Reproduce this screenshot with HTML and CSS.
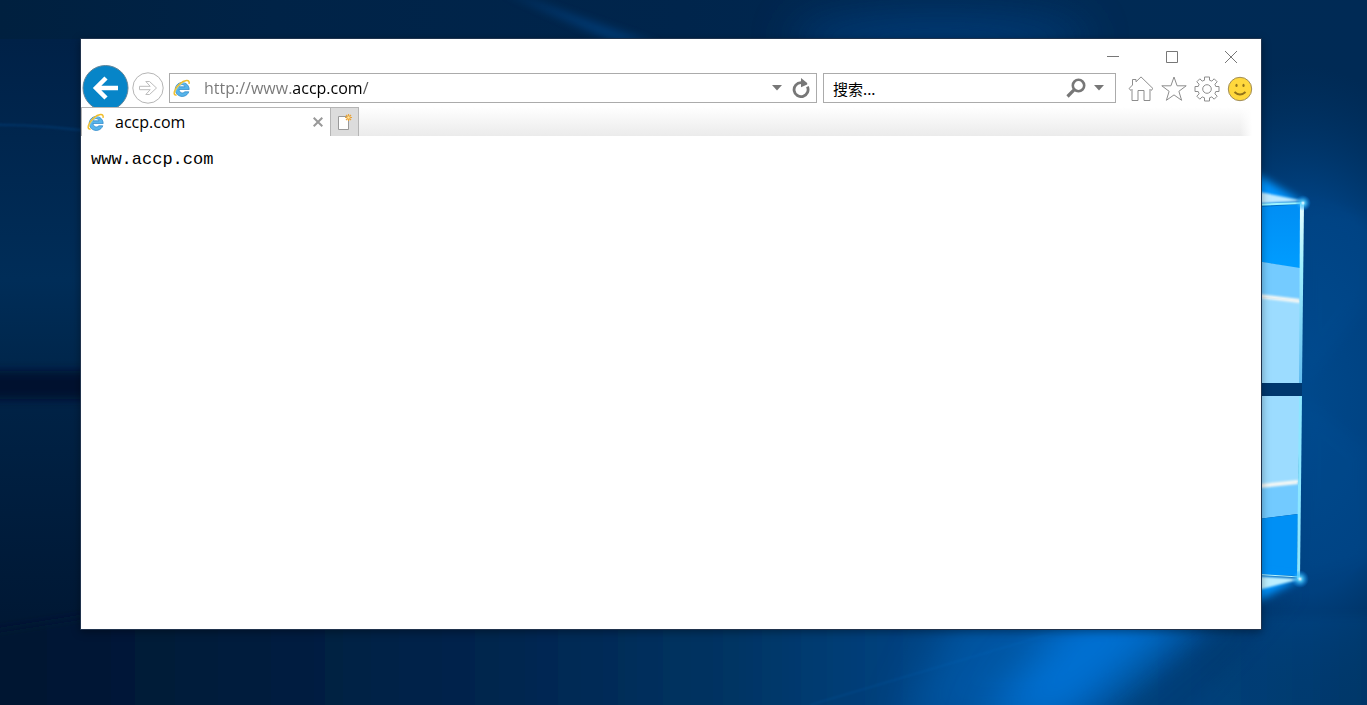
FILE: index.html
```html
<!DOCTYPE html>
<html lang="zh-CN">
<head>
<meta charset="utf-8">
<title>accp.com</title>
<link rel="stylesheet" href="styles.css">
</head>
<body class="desktop">
<svg class="wallpaper" viewBox="0 0 1367 705" preserveAspectRatio="none" aria-hidden="true">
  <defs>
    <linearGradient id="sky" x1="0" y1="0" x2="1" y2="0">
      <stop offset="0" stop-color="#00203f"/><stop offset=".2" stop-color="#002347"/><stop offset=".5" stop-color="#00254c"/><stop offset=".8" stop-color="#002a54"/><stop offset="1" stop-color="#002a55"/>
    </linearGradient>
    <linearGradient id="floor" x1="0" y1="0" x2="1" y2="0">
      <stop offset="0" stop-color="#00142f"/><stop offset=".2" stop-color="#001d3d"/><stop offset=".38" stop-color="#002650"/><stop offset=".52" stop-color="#003463"/><stop offset=".64" stop-color="#004280"/><stop offset=".8" stop-color="#004480"/><stop offset=".9" stop-color="#003b70"/><stop offset="1" stop-color="#00305f"/>
    </linearGradient>
    <linearGradient id="side" x1="0" y1="0" x2="0" y2="1"><stop offset="0" stop-color="#002147"/><stop offset=".4" stop-color="#002d58"/><stop offset=".55" stop-color="#00264b"/><stop offset=".58" stop-color="#002347"/><stop offset="1" stop-color="#001733"/></linearGradient>
    <radialGradient id="halo"><stop offset="0" stop-color="#00498c"/><stop offset=".6" stop-color="#004486" stop-opacity=".85"/><stop offset="1" stop-color="#00376b" stop-opacity="0"/></radialGradient>
    <radialGradient id="spark"><stop offset="0" stop-color="#fff"/><stop offset=".3" stop-color="#50cfff" stop-opacity=".8"/><stop offset="1" stop-color="#008cff" stop-opacity="0"/></radialGradient>
    <linearGradient id="deep" x1="0" y1="0" x2="0" y2="1"><stop offset="0" stop-color="#008ef4"/><stop offset="1" stop-color="#009dff"/></linearGradient>
    <linearGradient id="edge" x1="0" y1="0" x2="0" y2="1"><stop offset="0" stop-color="#eaffff"/><stop offset=".35" stop-color="#9ff0ff"/><stop offset="1" stop-color="#62bcef"/></linearGradient>
    <filter id="haze" filterUnits="userSpaceOnUse" x="-100" y="-100" width="1567" height="905"><feGaussianBlur stdDeviation="22"/></filter>
    <filter id="soft" filterUnits="userSpaceOnUse" x="-100" y="-100" width="1567" height="905"><feGaussianBlur stdDeviation="8"/></filter>
    <filter id="glow" filterUnits="userSpaceOnUse" x="-100" y="-100" width="1567" height="905"><feGaussianBlur stdDeviation="4"/></filter>
    <filter id="fine" filterUnits="userSpaceOnUse" x="-100" y="-100" width="1567" height="905"><feGaussianBlur stdDeviation="1"/></filter>
  </defs>
  <rect width="1367" height="705" fill="url(#sky)"/>
  <rect y="39" width="90" height="600" fill="url(#side)"/>
  <path d="M-30 125Q40 123 100 133" fill="none" stroke="#00407b" stroke-width="2" opacity=".6" filter="url(#fine)"/>
  <path d="M-30 371H110V399H-30Z" fill="#001029" opacity=".8" filter="url(#glow)"/>
  <path d="M-50 638L90 616H1450V760H-50Z" fill="url(#floor)" filter="url(#glow)"/>
  <path d="M500-10L660 45L620 45Z" fill="#00509a" opacity=".5" filter="url(#glow)"/>
  <ellipse cx="940" cy="38" rx="150" ry="26" fill="#004080" opacity=".75" filter="url(#haze)"/>
  <ellipse cx="1300" cy="395" rx="190" ry="330" fill="url(#halo)"/>
  <path d="M960 600L1230 600L1070 730L900 730Z" fill="#0065bd" opacity=".55" filter="url(#haze)"/>
  <path d="M1080 600L1210 600L1060 725L980 725Z" fill="#0080ee" opacity=".65" filter="url(#haze)"/>
  <path d="M1300 590L1180 720H1110L1220 630Z" fill="#00386d" opacity=".4" filter="url(#soft)"/>
  <path d="M1070 628L810 705" stroke="#0079d3" opacity=".25" filter="url(#fine)"/>
  <path d="M1303 203L1367 217V302L1303 390Z" fill="#0059a5" opacity=".15" filter="url(#soft)"/>
  <path d="M1300 579L1367 560V450L1303 395Z" fill="#0059a5" opacity=".15" filter="url(#soft)"/>
  <path d="M1250 170L1304 203L1250 209Z" fill="#0094ff" filter="url(#glow)"/>
  <path d="M1250 190L1304 201L1250 204Z" fill="#bfeaff" filter="url(#fine)"/>
  <path d="M1250 208L1302 204L1300 269L1250 260Z" fill="url(#deep)"/>
  <path d="M1250 260L1300 268V301L1250 295Z" fill="#74cbff"/>
  <path d="M1250 296L1300 301V383H1250Z" fill="#9cdcff"/>
  <path d="M1250 295L1300 301" stroke="#f5f8f5" stroke-width="4" filter="url(#fine)"/>
  <path d="M1300 203H1304L1302 383H1299Z" fill="url(#edge)"/>
  <path d="M1250 205L1304 203" stroke="#9cf4ff" stroke-width="2"/>
  <path d="M1250 383H1302V396H1250Z" fill="#00376e"/>
  <path d="M1250 396H1301L1298 482L1250 488Z" fill="#9cdcff"/>
  <path d="M1250 487L1298 482V514L1250 520Z" fill="#72caff"/>
  <path d="M1250 520L1298 514L1297 576L1250 574Z" fill="#0090f5"/>
  <path d="M1250 487L1298 482" stroke="#f5f8f5" stroke-width="4" filter="url(#fine)"/>
  <path d="M1299 396H1302L1300 579H1297Z" fill="#8ce6ff"/>
  <path d="M1250 605L1300 579L1250 573Z" fill="#0094ff" filter="url(#glow)"/>
  <path d="M1250 592L1301 579L1250 576Z" fill="#bcefff" filter="url(#fine)"/>
  <path d="M1250 574L1300 577" stroke="#b7f6ff" stroke-width="1"/>
  <circle cx="1303" cy="203" r="8" fill="url(#spark)"/>
  <circle cx="1300" cy="579" r="9" fill="url(#spark)"/>
</svg>

<svg class="sprite" aria-hidden="true">
  <symbol id="ie" viewBox="0 0 18 18">
    <path d="M6 10.5H16.2A7 7 0 1 0 15.8 12.8H11.8C10.3 14.8 6.4 14.2 6 10.5ZM6 7.8C6.6 4.8 11.3 4.8 11.9 7.8Z" fill="#56b4ea" fill-rule="evenodd" stroke="#2683c5" stroke-width=".7"/>
    <path d="M3.6 8C5.5 4.8 8.5 3.5 12 3.7" fill="none" stroke="#b9e4fc" stroke-width=".8"/>
    <path d="M3.6 15.9C-.8 17 1.2 9.6 6.6 5C11 1.3 17.4-.4 16 4.9" fill="none" stroke="#f0bd28" stroke-width="1.5"/>
    <path d="M2 14.2C1.8 11.5 5.8 6.6 9.6 4" fill="none" stroke="#ffe36f" stroke-width=".7"/>
  </symbol>
</svg>

<main class="window">
  <header class="titlebar">
    <button class="caption" aria-label="最小化"><svg viewBox="0 0 12 12"><path d="M0 5.5H12"/></svg></button>
    <button class="caption" aria-label="最大化"><svg viewBox="0 0 12 12"><path d="M.5.5H11.5V11.5H.5Z"/></svg></button>
    <button class="caption" aria-label="关闭"><svg viewBox="0 0 12 12"><path d="M0 0L12 12M12 0L0 12"/></svg></button>
  </header>

  <nav class="navbar">
    <button class="back" aria-label="后退">
      <svg viewBox="0 0 48 46"><circle cx="24.5" cy="23" r="22.5" fill="#0785c8" stroke="#5f8499"/><path d="M37 23H15M25 13L15 23L25 33" fill="none" stroke="#fff" stroke-width="4.5"/></svg>
    </button>
    <button class="forward" aria-label="前进">
      <svg viewBox="0 0 32 32"><circle cx="16" cy="16" r="15.2" fill="#fff" stroke="#b5b5b5"/><path d="M7.5 14.3H18.2L13.8 9.5H17.5L24.5 16L17.5 22.5H13.8L18.2 17.7H7.5Z" fill="#fff" stroke="#bcbcbc"/></svg>
    </button>
    <div class="field address">
      <svg class="favicon"><use href="#ie"/></svg>
      <input class="url" type="text" aria-label="地址" value="http://www.accp.com/">
      <button class="tool" aria-label="显示地址列表"><svg class="chevron" viewBox="0 0 10 6"><path d="M0 0H10L5 5.5Z" fill="#777"/></svg></button>
      <button class="tool refresh" aria-label="刷新"><svg viewBox="0 0 18 20"><path d="M15.4 8.6A7 7 0 1 1 9 4.6" fill="none" stroke="#777" stroke-width="2.8"/><path d="M9 0L15.2 5V6.5L9 9.2Z" fill="#777"/></svg></button>
    </div>
    <div class="field search">
      <input class="query" type="search" aria-label="搜索" placeholder="搜索...">
      <button class="tool find" aria-label="搜索"><svg viewBox="0 0 20 20"><circle cx="12.5" cy="7.5" r="5.7" fill="none" stroke="#777" stroke-width="2.6"/><path d="M8.3 11.7L1.5 18.5" stroke="#777" stroke-width="3.2"/></svg></button>
      <button class="tool" aria-label="搜索选项"><svg class="chevron" viewBox="0 0 10 6"><path d="M0 0H10L5 5.5Z" fill="#777"/></svg></button>
    </div>
    <div class="commands">
      <button class="command" aria-label="主页"><svg viewBox="0 0 26 26"><path d="M1 12.6L4.5 9V3.5H8V5.8L13 .9L25 12.6L23 14.4L22 13.4V24.5H16V14.5H10V24.5H4V13.4L3 14.4Z"/></svg></button>
      <button class="command" aria-label="收藏夹"><svg viewBox="0 0 26 26"><path d="M13 1L16.1 9.8H25.2L17.9 15.3L20.6 24.3L13 18.9L5.4 24.3L8.1 15.3L.8 9.8H9.9Z"/></svg></button>
      <button class="command" aria-label="工具"><svg viewBox="0 0 26 26"><path d="M10.5 1H15.5V4.2L17.8 5.1L20.2 2.8L23.2 5.8L20.9 8.2L21.8 10.5H25V15.5H21.8L20.9 17.8L23.2 20.2L20.2 23.2L17.8 20.9L15.5 21.8V25H10.5V21.8L8.2 20.9L5.8 23.2L2.8 20.2L5.1 17.8L4.2 15.5H1V10.5H4.2L5.1 8.2L2.8 5.8L5.8 2.8L8.2 5.1L10.5 4.2Z"/><circle cx="13" cy="13" r="4.3"/></svg></button>
      <button class="command smiley" aria-label="反馈"><svg viewBox="0 0 26 26"><circle class="face" cx="13" cy="13" r="11.7"/><ellipse class="eye" cx="9.5" cy="9.4" rx="1.1" ry="1.7"/><ellipse class="eye" cx="16.5" cy="9.4" rx="1.1" ry="1.7"/><path class="mouth" d="M7.5 16Q13 21 18.5 16"/></svg></button>
    </div>
  </nav>

  <div class="tabstrip">
    <div class="tab">
      <svg class="favicon"><use href="#ie"/></svg>
      <span class="tab-title">accp.com</span>
      <button class="tab-close" aria-label="关闭选项卡"><svg viewBox="0 0 10 10"><path d="M.7.7L9.3 9.3M9.3.7L.7 9.3" stroke="#999" stroke-width="2"/></svg></button>
    </div>
    <button class="newtab" aria-label="新建选项卡"><svg viewBox="0 0 16 18"><path d="M1.5 3.5H11.5V16.5H1.5Z" fill="#fff" stroke="#999"/><path d="M11.5 1V8M8 4.5H15M9 2L14 7M14 2L9 7" stroke="#eaa439" stroke-width="1.2"/><circle cx="11.5" cy="4.5" r="1.2" fill="#ffe5a0"/></svg></button>
    <div class="strip-rest"></div>
  </div>

  <section class="page">www.accp.com</section>
</main>
</body>
</html>
```
FILE: styles.css
```css
* { box-sizing: border-box; }
.desktop {
  margin: 0;
  min-height: 100vh;
  padding: 39px 106px 76px 81px;
  display: flex;
  position: relative;
  overflow: hidden;
  background: #002551;
  font: 16px/20px "Open Sans", "Noto Sans CJK SC", sans-serif;
  color: #000;
}
.wallpaper { position: absolute; inset: 0; width: 100%; height: 100%; }
.sprite { position: absolute; width: 0; height: 0; }
svg { display: block; }
button { border: 0; padding: 0; background: none; flex: none; }
input { border: 0; padding: 0; outline: 0; background: none; font: inherit; min-width: 0; flex: 1; }
.window {
  position: relative;
  flex: 1;
  min-width: 0;
  display: flex;
  flex-direction: column;
  background: #fff;
  box-shadow: 0 0 0 1px #20334d, 0 2px 8px 1px rgba(0, 0, 0, .35);
}
.titlebar { height: 26px; padding: 12px 24px 0 0; display: flex; justify-content: flex-end; gap: 47px; }
.caption { width: 12px; height: 12px; }
.caption svg { width: 12px; height: 12px; fill: none; stroke: #777; }
.navbar { height: 42px; display: flex; align-items: flex-start; padding-right: 8px; }
.back { width: 48px; height: 42px; overflow: hidden; }
.back svg { width: 48px; height: 46px; }
.forward { width: 32px; margin: 7px 5px 0 3px; }
.forward svg { width: 32px; height: 32px; }
.field {
  height: 30px;
  margin-top: 8px;
  border: 1px solid #ababab;
  background: #fff;
  display: flex;
  align-items: center;
  min-width: 0;
}
.address { flex: 637 1 0; padding: 0 6px 0 3px; }
.search { flex: 271 1 0; margin-left: 6px; padding: 0 11px 0 9px; }
.favicon { width: 18px; height: 18px; flex: none; }
.url {
  margin-left: 13px;
  height: 26px;
  background: linear-gradient(90deg, #777 88px, #000 88px, #000 158px, #555 158px);
  background-clip: text;
  -webkit-background-clip: text;
  color: transparent;
}
.query { height: 26px; appearance: none; font-family: "Noto Sans CJK SC", sans-serif; font-size: 15px; }
.query::placeholder { color: #000; opacity: 1; }
.chevron { width: 10px; height: 6px; }
.refresh { margin-left: 10px; }
.refresh svg { width: 18px; height: 20px; }
.find { margin-right: 8px; }
.find svg { width: 20px; height: 20px; }
.commands { display: flex; gap: 7px; margin: 11px 0 0 12px; }
.command { width: 26px; height: 26px; }
.command svg { width: 26px; height: 26px; fill: #fff; stroke: #8d8d8d; }
.smiley .face { fill: #ffd83d; stroke: #a08c58; }
.smiley .eye { fill: #92731b; stroke: none; }
.smiley .mouth { fill: none; stroke: #92731b; stroke-width: 2; }
.tabstrip { height: 29px; display: flex; padding-right: 9px; }
.tab {
  flex: 0 1 249px;
  border: 1px solid #b5b5b5;
  border-width: 1px 0 0 1px;
  background: #fff;
  display: flex;
  align-items: center;
  padding: 0 7px 0 5px;
}
.tab-title { flex: 1; margin-left: 10px; }
.tab-close svg { width: 10px; height: 10px; }
.newtab {
  width: 29px;
  border: 1px solid #b5b5b5;
  border-bottom: 0;
  background: #dcdcdc;
  display: flex;
  align-items: center;
  justify-content: center;
}
.newtab svg { width: 16px; height: 18px; }
.strip-rest {
  flex: 1;
  background: linear-gradient(90deg, transparent calc(100% - 12px), #fff), linear-gradient(#fff, #ebebeb);
}
.page { flex: 1; padding: 14px 10px; font: 17px/20px "Liberation Mono", monospace; }
```
